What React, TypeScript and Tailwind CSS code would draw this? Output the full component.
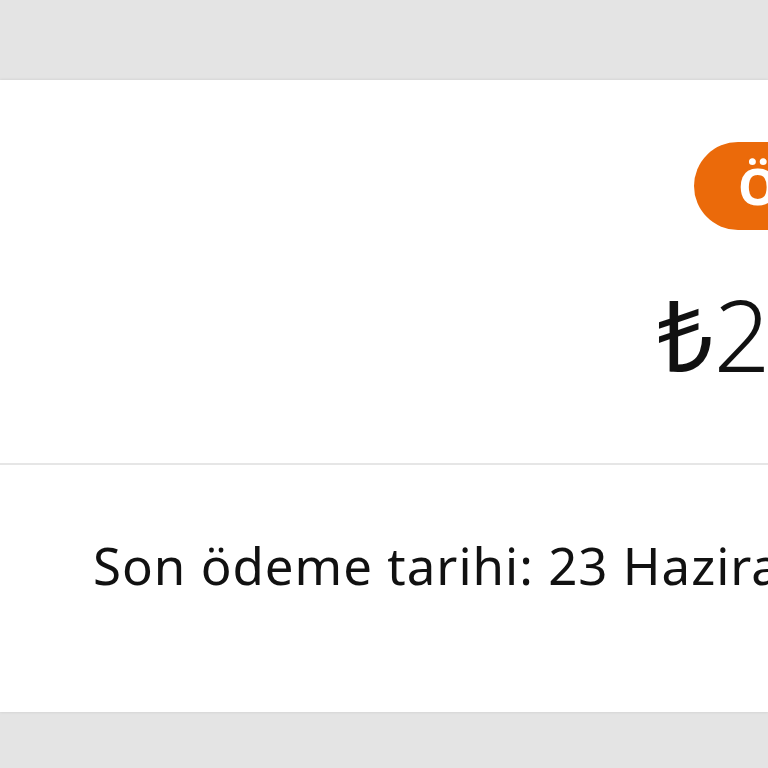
export default function App() {
  return (
    <div className="h-[768px] w-[768px] overflow-hidden bg-[#e4e4e4] font-['Noto_Sans',sans-serif] text-[#111]">
      <div className="h-[80px]" />
      <div className="flex h-[632px] flex-col bg-white shadow-[0_0_3px_rgba(0,0,0,0.12)]">
        <section className="flex h-[383px] whitespace-nowrap">
          <div className="w-[657px] shrink-0" />
          <div className="flex flex-col pt-[62px]">
            <span className="ml-[37px] flex h-[88px] items-center rounded-full bg-[#eb6a0a] px-[44px] text-[50px] font-bold text-white">
              Ödendi
            </span>
            <span className="mt-[54px] text-[99px] leading-none font-light">
              <span className="font-normal">₺</span>2 45,90
            </span>
          </div>
        </section>
        <div className="h-[2px] bg-[#e6e6e6]" />
        <section className="flex flex-1 items-center pb-[46px] pl-[93px] whitespace-nowrap">
          <span className="text-[51px] tracking-[1px]">Son ödeme tarihi: 23 Haziran 2024</span>
        </section>
      </div>
    </div>
  );
}
